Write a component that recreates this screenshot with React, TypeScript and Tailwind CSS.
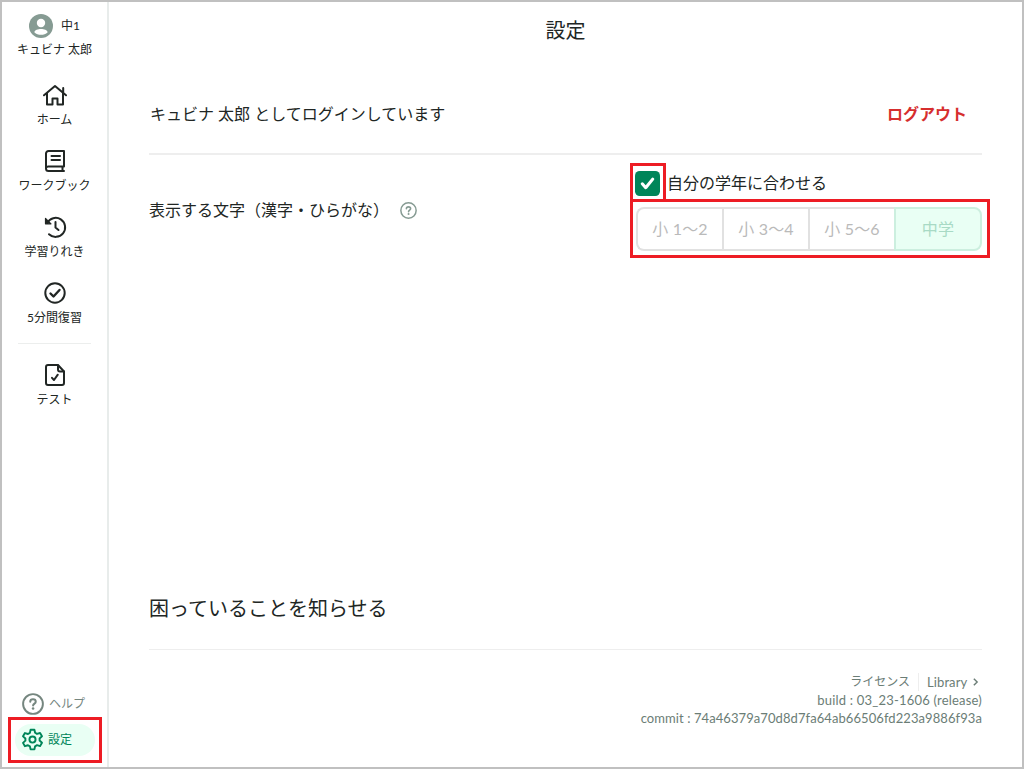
import type { ReactNode } from 'react';
import clsx from 'clsx';

type IconProps = { children: ReactNode; className?: string };

function Icon({ children, className }: IconProps) {
  return (
    <svg
      viewBox="0 0 24 24"
      className={clsx('shrink-0', className ?? 'h-6 w-6')}
      fill="none"
      stroke="currentColor"
      strokeWidth="2"
      strokeLinecap="round"
      strokeLinejoin="round"
    >
      {children}
    </svg>
  );
}

function HelpIcon({ className }: { className?: string }) {
  return (
    <svg viewBox="0 0 24 24" className={className} fill="none" stroke="currentColor">
      <circle cx="12" cy="12" r="10.8" strokeWidth="2.1" />
      <path
        d="M9 9.6C9 7.800 10.200 6.900 12 6.900s3 1 3 2.600c0 2-2.900 2.100-2.900 4.200"
        strokeWidth="2.200"
        strokeLinecap="round"
      />
      <circle cx="12.100" cy="17" r="1.400" fill="currentColor" stroke="none" />
    </svg>
  );
}

const navItems = [
  {
    label: 'ホーム',
    icon: (
      <Icon>
        <path d="M1 12.300 12 3l11 9.300M4 10.200V21.500h5.500v-6h5v6H20V10.200M20.200 5v4.500" />
      </Icon>
    ),
  },
  {
    label: 'ワークブック',
    icon: (
      <Icon>
        <path d="M21 17.500V2H5.500A2.500 2.500 0 0 0 3 4.500v15A2.500 2.500 0 0 0 5.500 22H21M21 17.500H5.500A2.200 2.200 0 0 0 3 19.500M19.500 17.500V22M8.500 7H17M8.500 11H17" />
      </Icon>
    ),
  },
  {
    label: '学習りれき',
    icon: (
      <Icon>
        <path d="M4.200 8A9.500 9.500 0 1 1 6 19.200M12.500 7v5.500l3 2.500" />
        <path d="M2.500 3.300v5.500H8z" fill="currentColor" strokeWidth="1.200" />
      </Icon>
    ),
  },
  {
    label: '5分間復習',
    icon: (
      <Icon>
        <circle cx="12" cy="12" r="9.700" />
        <path d="m7.500 12.500 3 3 6-6.500" strokeWidth="2.400" />
      </Icon>
    ),
  },
];

const grades = ['小 1〜2', '小 3〜4', '小 5〜6', '中学'];

function NavItem({ label, icon }: { label: string; icon: ReactNode }) {
  return (
    <div className="flex h-[66px] flex-col items-center">
      {icon}
      <span className="mt-1 text-xs leading-[18px]">{label}</span>
    </div>
  );
}

function Sidebar() {
  return (
    <aside className="flex w-[107px] shrink-0 flex-col border-r-2 border-[#e8eceb] pt-3">
      <div className="flex h-6 items-center gap-2 pl-[27px]">
        <svg viewBox="0 0 24 24" className="h-6 w-6">
          <circle cx="12" cy="12" r="12" fill="#869b93" />
          <circle cx="12" cy="9" r="4.200" fill="#fff" />
          <path d="M5.300 18.200c.5-2.200 3.500-3.200 6.700-3.200s6.200 1 6.700 3.200c-1.900 1.900-4.300 2.600-6.700 2.600s-4.800-.7-6.700-2.600z" fill="#fff" />
        </svg>
        <span className="text-xs">中1</span>
      </div>
      <div className="mt-[3px] text-center text-xs leading-[18px]">キュビナ 太郎</div>
      <nav className="mt-6">
        {navItems.map((item) => (
          <NavItem key={item.label} label={item.label} icon={item.icon} />
        ))}
        <div className="mx-4 -mt-1 mb-[19px] h-px bg-[#eceeed]" />
        <NavItem
          label="テスト"
          icon={
            <Icon>
              <path d="M15 2H5a2 2 0 0 0-2 2v16a2 2 0 0 0 2 2h14a2 2 0 0 0 2-2V8.500z" />
              <path d="M15 2.500v4A2 2 0 0 0 17 8.500h4M9 14.800l2 2.200 3.800-5.300" />
            </Icon>
          }
        />
      </nav>
      <div className="mt-auto pb-[11px]">
        <div className="flex h-7 items-center gap-[5px] pl-5 text-[#75867f]">
          <HelpIcon className="h-[22px] w-[22px]" />
          <span className="text-xs">ヘルプ</span>
        </div>
        <div className="relative mt-[6px] ml-[13px] flex h-8 w-20 items-center gap-1 rounded-full bg-[#e9fff4] pl-[6px] text-[#008559]">
          <Icon className="-mt-px h-[23px] w-[23px]">
            <path d="m10 1.800-.7 3.300-2 1.200-3.200-1-2 3.400 2.500 2.300v2.200l-2.500 2.300 2 3.500 3.200-1 2 1.200.7 3.100h4l.7-3.200 2-1.200 3.200 1 2-3.500-2.500-2.300v-2.200l2.500-2.300-2-3.400-3.200 1-2-1.200-.7-3.200z" />
            <circle cx="12" cy="12.100" r="3.200" />
          </Icon>
          <span className="text-xs">設定</span>
          <div className="absolute -top-[7px] -left-[7px] h-[46px] w-[94px] border-[3px] border-[#ed1c24]" />
        </div>
      </div>
    </aside>
  );
}

function GradeSetting() {
  return (
    <div className="relative flex w-[346px] shrink-0 flex-col">
      <div className="flex h-6 items-center gap-[7px]">
        <svg viewBox="0 0 24 24" className="-ml-px h-[25px] w-[25px]">
          <rect width="24" height="24" rx="4.500" fill="#008559" />
          <path d="m7 12.300 3.300 3.700L17 7.800" fill="none" stroke="#fff" strokeWidth="3" strokeLinecap="round" strokeLinejoin="round" />
        </svg>
        <span className="text-base">自分の学年に合わせる</span>
      </div>
      <div className="mt-3 flex h-11">
        {grades.map((grade, i) => (
          <div
            key={grade}
            className={clsx(
              'flex flex-1 items-center justify-center border-y-2 border-l-2 text-base tracking-[0.2px]',
              i === 0 && 'rounded-l-lg',
              i === 3
                ? 'rounded-r-lg border-r-2 border-[#ccefdf] bg-[#e9fff4] text-[#a8dac5]'
                : 'border-[#e1e1e1] text-[#bababa]'
            )}
          >
            {grade}
          </div>
        ))}
      </div>
      <div className="absolute -top-[8px] -left-[6px] h-[39px] w-[36px] border-[3px] border-[#ed1c24]" />
      <div className="absolute top-[28px] -left-[6px] h-[59px] w-[360px] border-[3px] border-[#ed1c24]" />
    </div>
  );
}

export default function App() {
  return (
    <div className="flex h-[769px] w-[1024px] overflow-hidden border-2 border-[#c0c0c0] bg-white font-['Lato','Noto_Sans_CJK_JP',sans-serif] whitespace-nowrap text-[#212624]">
      <Sidebar />
      <main className="flex flex-1 flex-col px-10">
        <h1 className="h-14 text-center text-xl leading-14">設定</h1>
        <section className="mt-4 flex h-[79px] items-center justify-between text-base">
          <p className="pl-px">キュビナ 太郎 としてログインしています</p>
          <button className="mr-[15px] font-bold text-[#d62e2e]">ログアウト</button>
        </section>
        <div className="h-0.5 shrink-0 bg-[#eeeeee]" />
        <section className="mt-4 flex items-start justify-between">
          <div className="mt-[27px] flex h-6 items-center text-base">
            <span>表示する文字（漢字・ひらがな）</span>
            <HelpIcon className="ml-[11px] h-[17px] w-[17px] text-[#869b93]" />
          </div>
          <GradeSetting />
        </section>
        <footer className="mt-auto text-[13px] leading-[18px] text-[#6b7d76]">
          <div className="flex h-[82px] items-center border-b border-[#eeeeee] pb-0.5 text-xl text-[#212624]">
            困っていることを知らせる
          </div>
          <div className="mt-[23px] flex items-center justify-end pr-[3px]">
            <span className="text-xs">ライセンス</span>
            <span className="mr-2 ml-2 h-[18px] w-px bg-[#eeeeee]" />
            <span className="w-[41px] tracking-[0.1px]">Library</span>
            <svg viewBox="0 0 8 12" className="ml-1 h-[10px] w-[7px]" fill="none" stroke="currentColor" strokeWidth="1.700">
              <path d="m2 2 4 4-4 4" />
            </svg>
          </div>
          <div className="text-right tracking-[0.2px]">build : 03_23-1606 (release)</div>
          <div className="mb-10 text-right tracking-[0.08px]">
            commit : 74a46379a70d8d7fa64ab66506fd223a9886f93a
          </div>
        </footer>
      </main>
    </div>
  );
}
